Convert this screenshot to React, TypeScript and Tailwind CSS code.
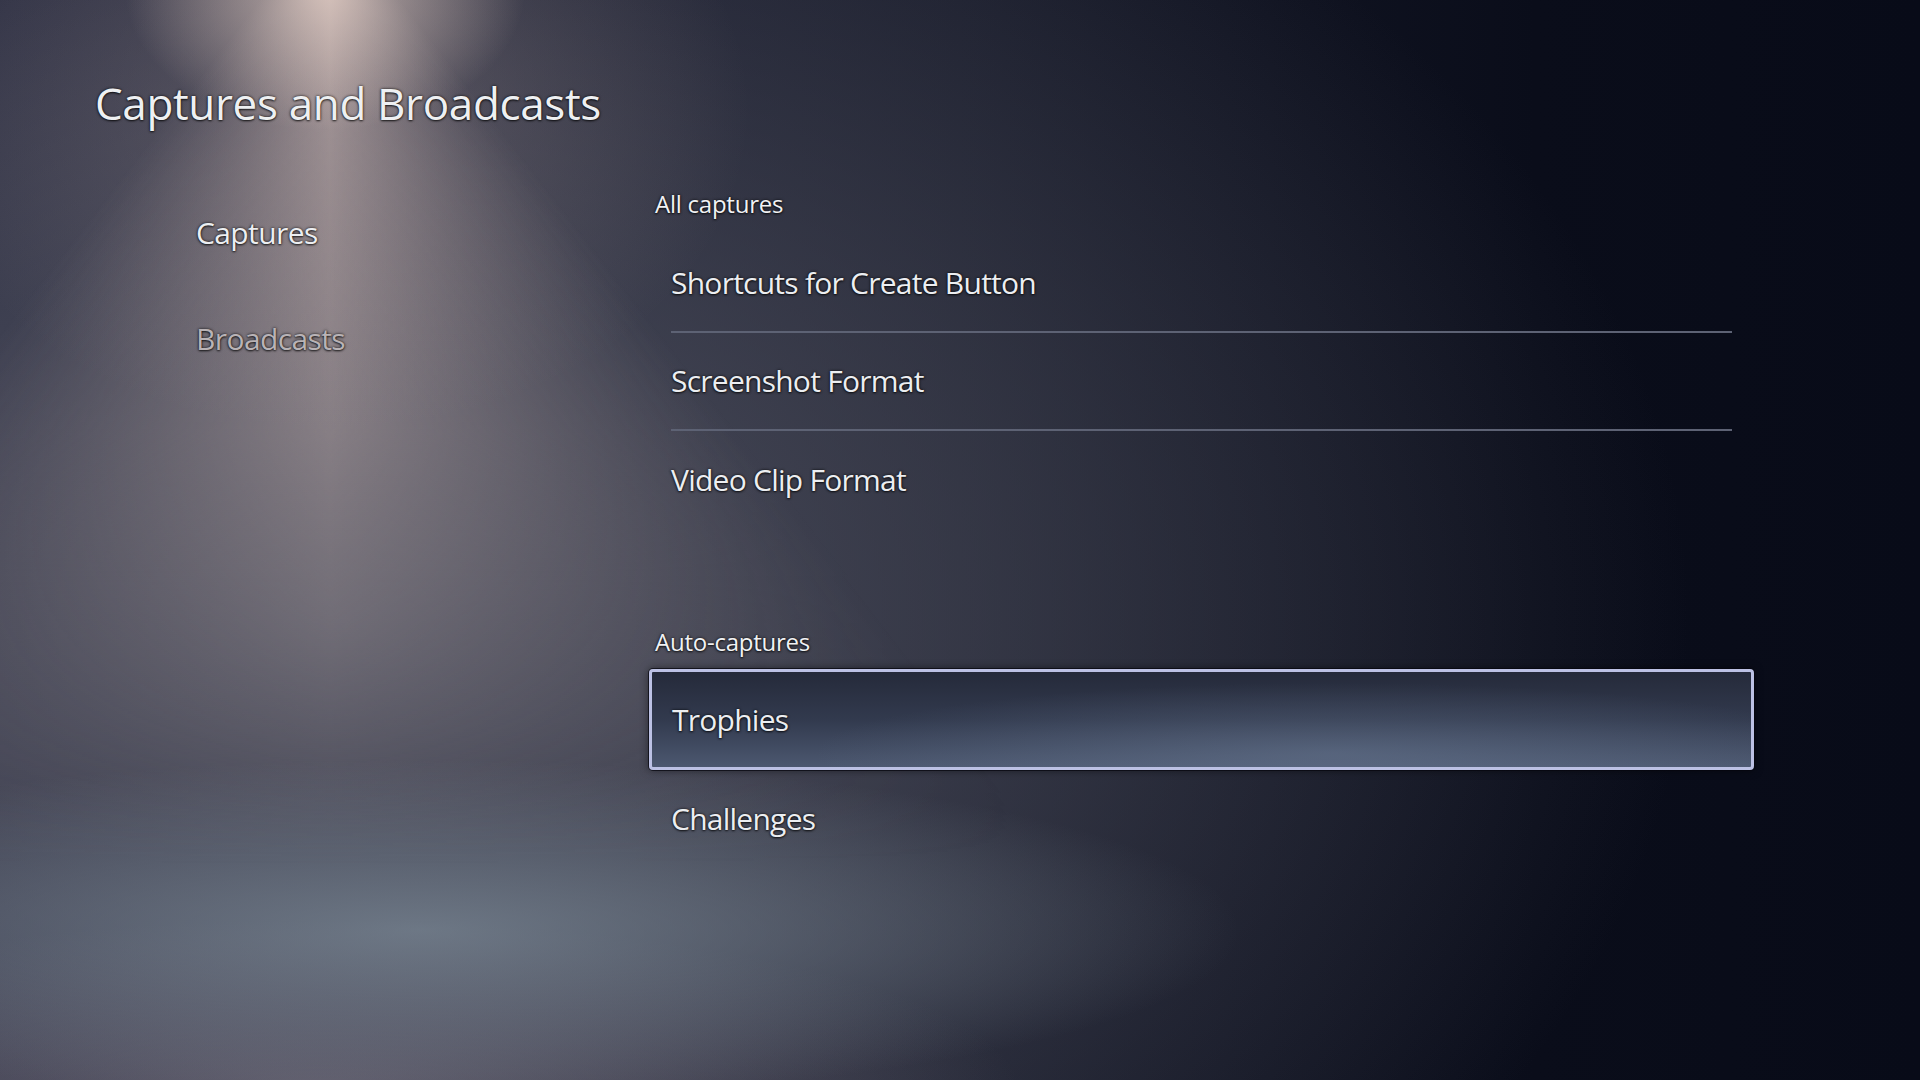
const allCaptures = ['Shortcuts for Create Button', 'Screenshot Format', 'Video Clip Format'];

const textShadow = '[text-shadow:0_0_3px_rgba(0,0,0,0.85),0_1px_2px_rgba(0,0,0,0.6)]';

function Row({ label, last }: { label: string; last?: boolean }) {
  return (
    <div
      className={`mx-[22px] flex h-[98px] items-center ${last ? '' : 'border-b-2 border-[#5d6274]'}`}
    >
      <span className={`text-[30px] leading-none text-[#eceef1] tracking-[-0.025em] ${textShadow}`}>{label}</span>
    </div>
  );
}

function SectionLabel({ children }: { children: string }) {
  return (
    <div className={`ml-[6px] flex h-[40px] items-center text-[24px] leading-none text-[#f1f2f4] tracking-[-0.01em] ${textShadow}`}>
      {children}
    </div>
  );
}

export default function App() {
  return (
    <div
      className="relative h-[1080px] w-[1920px] overflow-hidden bg-[radial-gradient(ellipse_820px_170px_at_420px_930px,rgba(128,142,155,0.7),rgba(128,142,155,0)_100%),radial-gradient(ellipse_700px_170px_at_320px_1090px,rgba(118,113,127,0.65),rgba(118,113,127,0)_100%),radial-gradient(ellipse_1350px_950px_at_340px_620px,rgba(82,84,98,0.95),rgba(82,84,98,0)_100%),linear-gradient(to_right,#23253a_0%,#171a29_50%,#0a0d1a_80%,#080b18_100%)]"
      style={{ fontFamily: '"Open Sans", "Liberation Sans", sans-serif' }}
    >
      {/* spotlight beam */}
      <div className="pointer-events-none absolute inset-0 bg-[conic-gradient(from_142deg_at_330px_-90px,rgba(198,180,177,0)_0deg,rgba(198,180,177,0.68)_38deg,rgba(198,180,177,0)_76deg)] [mask-image:linear-gradient(to_bottom,black_0%,rgba(0,0,0,0.75)_40%,transparent_80%)]" />
      <div className="pointer-events-none absolute inset-0 bg-[radial-gradient(ellipse_200px_140px_at_325px_-10px,rgba(232,210,200,0.75),rgba(232,210,200,0)_100%),radial-gradient(ellipse_420px_320px_at_330px_110px,rgba(185,166,164,0.3),rgba(185,166,164,0)_100%)]" />

      <div className="relative">
        <div className="pt-[75px] pl-[95px]">
          <h1 className={`h-[56px] text-[44px] leading-[56px] font-normal text-[#eef0f2] tracking-[-0.008em] ${textShadow}`}>
            Captures and Broadcasts
          </h1>
        </div>

        <div className="mt-[53px] flex">
          {/* side menu */}
          <nav className="w-[649px] pl-[196px] pt-[23px]">
            <div className={`flex h-[52px] items-center text-[30px] leading-none text-[#eceef1] tracking-[-0.02em] ${textShadow}`}>
              Captures
            </div>
            <div className={`mt-[54px] flex h-[52px] items-center text-[30px] leading-none text-[#b9b3b6] tracking-[-0.02em] ${textShadow}`}>
              Broadcasts
            </div>
          </nav>

          {/* settings list */}
          <div className="w-[1105px]">
            <SectionLabel>All captures</SectionLabel>
            <div className="mt-[11px]">
              {allCaptures.map((item, i) => (
                <Row key={item} label={item} last={i === allCaptures.length - 1} />
              ))}
            </div>

            <div className="mt-[93px]">
              <SectionLabel>Auto-captures</SectionLabel>
            </div>
            <div className="mt-[7px] flex h-[101px] items-center rounded-[4px] border-[3px] border-[#bcc1e4] bg-[radial-gradient(ellipse_520px_70px_at_62%_85%,rgba(120,138,165,0.35),rgba(120,138,165,0)),linear-gradient(to_bottom,#252a3a_0%,#323a4e_50%,#4c5870_100%)] pl-[20px] shadow-[0_0_0_1px_rgba(5,6,14,0.7),0_0_8px_rgba(0,0,0,0.55)]">
              <span className={`text-[30px] leading-none text-[#eceef1] tracking-[-0.025em] ${textShadow}`}>Trophies</span>
            </div>
            <Row label="Challenges" last />
          </div>
        </div>
      </div>
    </div>
  );
}
